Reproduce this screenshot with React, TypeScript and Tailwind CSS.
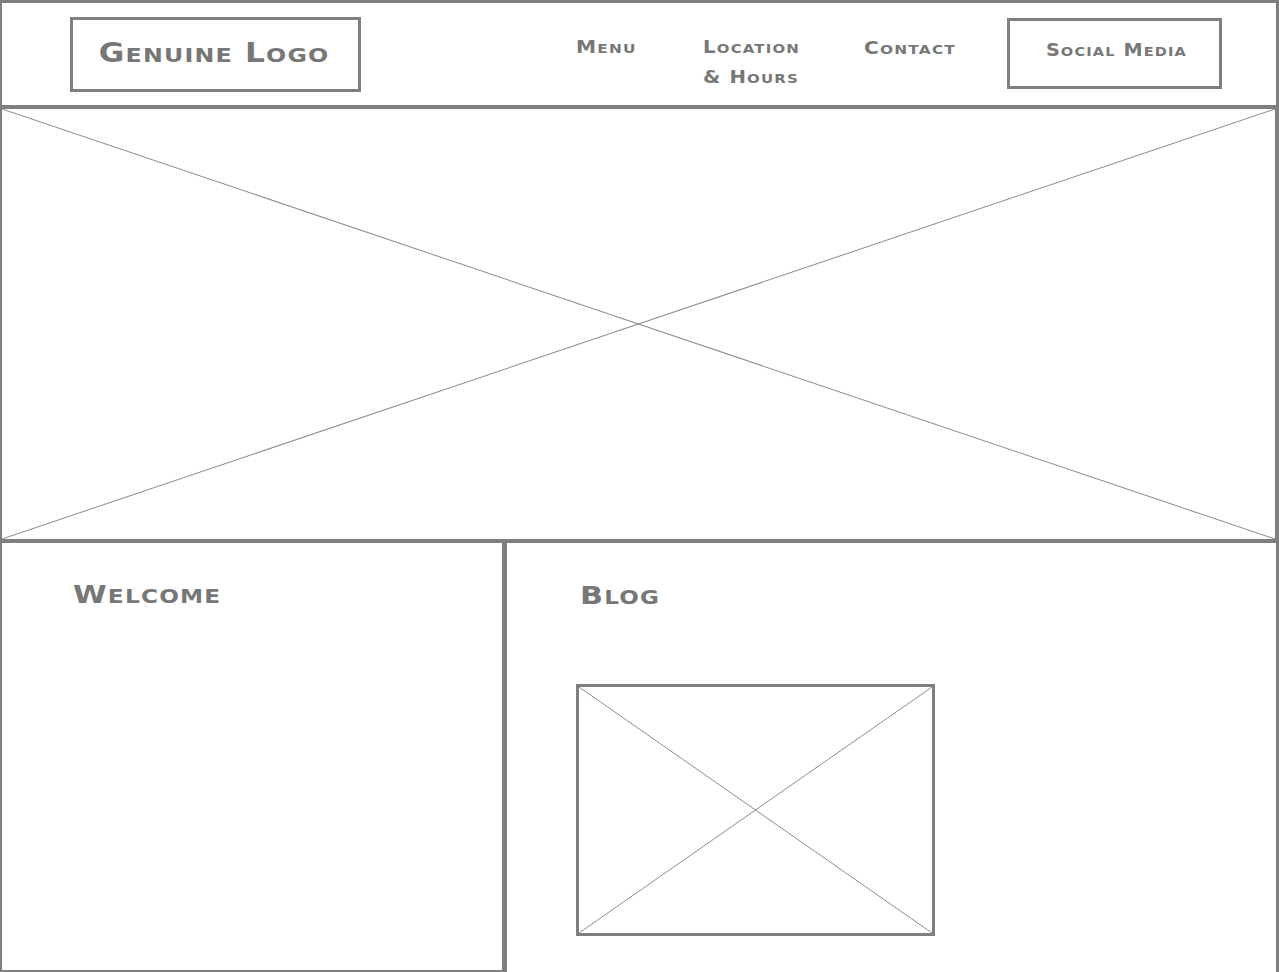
import React from "react";

const T =
  "font-['DejaVu_Sans',sans-serif] font-bold text-[#777777]";

function SC({ text }: { text: string }) {
  const words = text.split(" ");
  return (
    <>
      {words.map((w, i) => (
        <React.Fragment key={i}>
          {i > 0 && " "}
          <span>{w[0]}</span>
          <span className="uppercase text-[0.76em]">{w.slice(1)}</span>
        </React.Fragment>
      ))}
    </>
  );
}

function XBox() {
  return (
    <svg className="block w-full h-full" viewBox="0 0 100 100" preserveAspectRatio="none">
      <line x1="0" y1="0" x2="100" y2="100" stroke="#8c8c8c" strokeWidth="1" vectorEffect="non-scaling-stroke" />
      <line x1="100" y1="0" x2="0" y2="100" stroke="#8c8c8c" strokeWidth="1" vectorEffect="non-scaling-stroke" />
    </svg>
  );
}

export default function App() {
  return (
    <div className="w-[1279px] h-[972px] overflow-hidden bg-white flex flex-col">
      {/* Header */}
      <header className="h-[109px] shrink-0 border-t-[3px] border-l-2 border-r-[3px] border-b-4 border-[#7f7f7f] flex items-start">
        <div className="ml-[68px] mt-[14px] w-[291px] h-[75px] border-[3px] border-[#7f7f7f] flex items-center justify-center pl-[2px] pr-[4px]">
          <span className={`${T} inline-block whitespace-nowrap origin-center scale-x-[1.2] text-[26px] leading-[30px] tracking-[1px]`}>
            <SC text="Genuine Logo" />
          </span>
        </div>
        <nav className="ml-[215px] mt-[30px] flex items-start">
          <div className="w-[127px]">
            <div className={`${T} inline-block origin-left scale-x-[1.19] text-[17px] leading-[28px] tracking-[1px]`}>
              <SC text="Menu" />
            </div>
          </div>
          <div className="w-[161px]">
            <div className={`${T} inline-block origin-left scale-x-[1.16] text-[17px] leading-[28px] tracking-[1px]`}>
              <SC text="Location" />
              <br />
              <SC text="& Hours" />
            </div>
          </div>
          <div className="w-[143px] mt-[1px]">
            <div className={`${T} inline-block origin-left scale-x-[1.19] text-[17px] leading-[28px] tracking-[1px]`}>
              <SC text="Contact" />
            </div>
          </div>
        </nav>
        <div className="mt-[15px] w-[215px] h-[71px] border-[3px] border-[#7f7f7f] flex items-center justify-center pb-[6px] pl-[3px]">
          <span className={`${T} inline-block whitespace-nowrap origin-center scale-x-[1.13] text-[17px] leading-[28px] tracking-[1px]`}>
            <SC text="Social Media" />
          </span>
        </div>
      </header>

      {/* Hero placeholder */}
      <section className="h-[434px] shrink-0 border-l-2 border-r-4 border-b-4 border-[#7f7f7f]">
        <XBox />
      </section>

      {/* Bottom panels */}
      <div className="flex flex-1 min-h-0">
        <div className="w-[504px] shrink-0 border-l-2 border-r-2 border-b-2 border-[#7f7f7f] pl-[71px] pt-[39px]">
          <h2 className={`${T} inline-block origin-left scale-x-[1.22] text-[25px] leading-[25px] tracking-[1px]`}>
            <SC text="Welcome" />
          </h2>
        </div>
        <div className="flex-1 border-l-[3px] border-r-[3px] border-[#7f7f7f] pl-[69px] pt-[40px]">
          <h2 className={`${T} block w-fit origin-left scale-x-[1.21] text-[25px] leading-[25px] tracking-[1px] ml-[4px]`}>
            <SC text="Blog" />
          </h2>
          <div className="mt-[74px] w-[359px] h-[252px] border-[3px] border-[#7f7f7f]">
            <XBox />
          </div>
        </div>
      </div>
    </div>
  );
}
